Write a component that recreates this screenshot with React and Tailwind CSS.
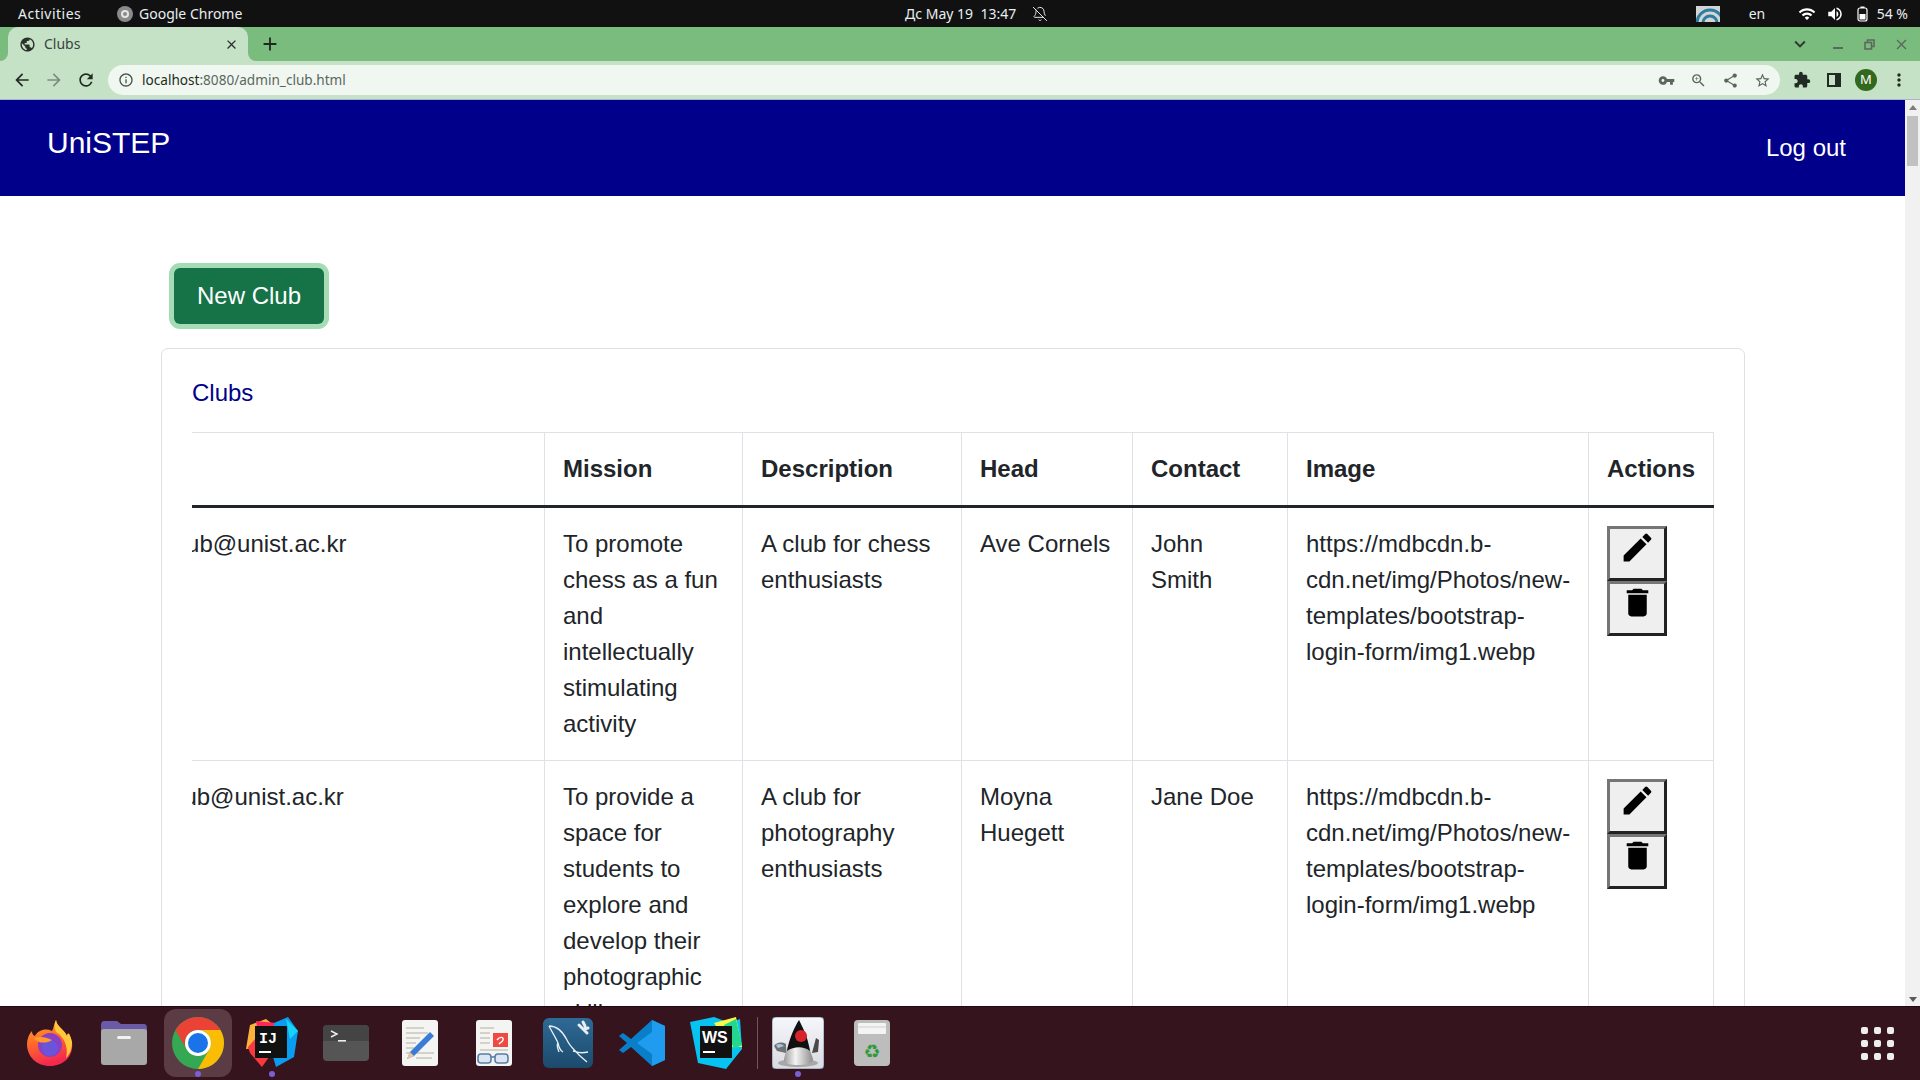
import React from "react";
import { BellOff } from "lucide-react";
import {
  MdAdd, MdArrowBack, MdArrowForward, MdClose, MdDelete, MdEdit, MdExpandMore, MdExtension,
  MdInfoOutline, MdMoreVert, MdPublic, MdRefresh, MdShare, MdStarBorder,
  MdVolumeUp, MdVpnKey, MdWifi, MdZoomIn,
} from "react-icons/md";

const imageUrl = "https://mdbcdn.b-cdn.net/img/Photos/new-templates/bootstrap-login-form/img1.webp";

const clubs = [
  {
    email: "chessclub@unist.ac.kr",
    mission: "To promote chess as a fun and intellectually stimulating activity",
    description: "A club for chess enthusiasts",
    head: "Ave Cornels",
    contact: "John Smith",
  },
  {
    email: "photoclub@unist.ac.kr",
    mission: "To provide a space for students to explore and develop their photographic skills",
    description: "A club for photography enthusiasts",
    head: "Moyna Huegett",
    contact: "Jane Doe",
  },
];

const headers = ["Email", "Mission", "Description", "Head", "Contact", "Image", "Actions"];
const colWidths = [457, 198, 219, 171, 155, 301, 125];

const TopBar = () => (
  <div className="h-[27px] shrink-0 bg-[#111111] flex items-center text-[14px] text-[#e8eef2] font-['Noto_Sans',sans-serif]">
    <span className="ml-[18px] w-[99px] tracking-[0.5px]">Activities</span>
    <span className="w-4 h-4 rounded-full bg-[#8a8a8a] flex items-center justify-center mr-[6px]">
      <span className="w-2 h-2 rounded-full border-2 border-[#e5e5e5]" />
    </span>
    <span className="w-[766px]">Google Chrome</span>
    <span className="w-[127px] whitespace-pre">Дс May 19  13:47</span>
    <BellOff size={16} strokeWidth={1.5} className="text-[#e8e8e8]" />
    <div className="ml-auto flex items-center">
      <svg width="24" height="16" viewBox="0 0 24 16">
        <rect width="24" height="16" fill="#d4d4d4" />
        <circle cx="14" cy="17" r="13" fill="none" stroke="#2b7ea1" strokeWidth="3" />
        <circle cx="14" cy="17" r="7" fill="none" stroke="#2b7ea1" strokeWidth="3" />
      </svg>
      <span className="ml-[29px] w-[45px]">en</span>
      <MdWifi className="ml-[4px] text-[18px] text-white" />
      <MdVolumeUp className="ml-[10px] text-[18px] text-white" />
      <svg className="ml-[13px]" width="12" height="16" viewBox="0 0 12 16">
        <rect x="1" y="2" width="9" height="13" rx="2" fill="none" stroke="#fff" strokeWidth="1.2" />
        <rect x="3.5" y="0.5" width="4" height="1.5" fill="#fff" />
        <rect x="2.5" y="8" width="6" height="5.5" fill="#fff" />
      </svg>
      <span className="ml-[8px] mr-[12px] whitespace-pre">54 %</span>
    </div>
  </div>
);

const TabStrip = () => (
  <div className="h-[34px] shrink-0 bg-[#7abc7e] flex items-stretch text-[#1f2a20] font-['Noto_Sans',sans-serif]">
    <div className="relative ml-2 w-[240px] bg-[#c5e1c6] rounded-t-[10px] flex items-center pl-[11px] pr-[9px] text-[14px]">
      <svg className="absolute left-[-8px] bottom-0" width="8" height="8" viewBox="0 0 8 8">
        <path d="M8 0V8H0A8 8 0 0 0 8 0Z" fill="#c5e1c6" />
      </svg>
      <svg className="absolute right-[-8px] bottom-0" width="8" height="8" viewBox="0 0 8 8">
        <path d="M0 0V8H8A8 8 0 0 1 0 0Z" fill="#c5e1c6" />
      </svg>
      <MdPublic className="text-[17px] text-[#2a312b] mr-[8px]" />
      <span className="text-[#3a443b] -mt-[2px]">Clubs</span>
      <MdClose className="ml-auto text-[15px] text-[#2a312b]" />
    </div>
    <div className="ml-[11px] flex items-center">
      <MdAdd className="text-[22px] text-[#20281f]" />
    </div>
    <div className="ml-auto flex items-center text-[#3f4a40]">
      <MdExpandMore className="text-[22px] text-[#2e3a2f]" />
      <span className="ml-[22px] w-[10px] h-[2px] bg-[#5c6a5e] mt-[7px]" />
      <svg className="ml-[21px]" width="11" height="11" viewBox="0 0 11 11" fill="none" stroke="#5c6a5e" strokeWidth="1.6">
        <rect x="1" y="3.5" width="6.5" height="6.5" />
        <path d="M3.5 3V1H10V7.5H8" />
      </svg>
      <MdClose className="ml-[18px] mr-[10px] text-[17px] text-[#5c6a5e]" />
    </div>
  </div>
);

const ToolBar = () => (
  <div className="h-[39px] shrink-0 bg-[#c5e1c6] flex items-center font-['Noto_Sans',sans-serif] border-b border-[#aab5cf]">
    <MdArrowBack className="ml-[12px] text-[20px] text-[#222b23]" />
    <MdArrowForward className="ml-[12px] text-[20px] text-[#7f8c80]" />
    <MdRefresh className="ml-[12px] text-[20px] text-[#222b23]" />
    <div className="ml-[12px] w-[1672px] h-[30px] rounded-full bg-[#f0f7f1] flex items-center pl-[10px] pr-[9px] text-[13.6px]">
      <MdInfoOutline className="text-[16px] text-[#4a524b]" />
      <span className="ml-[8px] text-[#1f2a20]">localhost</span>
      <span className="text-[#5d665e]">:8080/admin_club.html</span>
      <div className="ml-auto flex items-center gap-[15px] text-[#5d665e]">
        <MdVpnKey className="text-[17px]" />
        <MdZoomIn className="text-[17px]" />
        <MdShare className="text-[17px]" />
        <MdStarBorder className="text-[17px]" />
      </div>
    </div>
    <MdExtension className="ml-[13px] text-[18px] text-[#222b23]" />
    <svg className="ml-[16px]" width="14" height="14" viewBox="0 0 14 14">
      <rect x="1" y="1" width="12" height="12" fill="none" stroke="#222b23" strokeWidth="2" />
      <rect x="8" y="1" width="5" height="12" fill="#222b23" />
    </svg>
    <span className="ml-[14px] w-[22px] h-[22px] rounded-full bg-[#33691e] text-white text-[13px] flex items-center justify-center">M</span>
    <MdMoreVert className="ml-[12px] text-[20px] text-[#222b23]" />
  </div>
);

const NavBar = () => (
  <div className="h-[96px] shrink-0 bg-[#00008b] flex items-start text-white">
    <span className="ml-[47px] mt-[25px] text-[30px] leading-[36px]">UniSTEP</span>
    <span className="ml-auto mr-[59px] mt-[30px] text-[24px] leading-[36px]">Log out</span>
  </div>
);

const ActionButton = ({ children }) => (
  <button className="w-[60px] h-[55px] bg-[#efefef] border-[3px] border-t-[#767676] border-l-[#767676] border-r-[#222222] border-b-[#222222] flex justify-center text-[37px] text-black">
    {children}
  </button>
);

const ClubTable = () => (
  <div className="flex justify-end overflow-hidden">
    <table className="shrink-0 w-[1626px] table-fixed border-collapse text-[24px] leading-[36px] text-[#212529]">
      <colgroup>
        {colWidths.map((w) => (
          <col key={w} style={{ width: w }} />
        ))}
      </colgroup>
      <thead>
        <tr className="border-t border-b-[3px] border-t-[#dee2e6] border-b-[#212529]">
          {headers.map((h) => (
            <th key={h} className="px-[18px] py-[18px] text-left font-bold border-x border-[#dee2e6]">
              {h}
            </th>
          ))}
        </tr>
      </thead>
      <tbody>
        {clubs.map((c) => (
          <tr key={c.email} className="border-b border-[#dee2e6] align-top">
            <td className="px-[18px] py-[18px] border-x border-[#dee2e6]">{c.email}</td>
            <td className="px-[18px] py-[18px] border-x border-[#dee2e6]">{c.mission}</td>
            <td className="px-[18px] py-[18px] border-x border-[#dee2e6]">{c.description}</td>
            <td className="px-[18px] py-[18px] border-x border-[#dee2e6]">{c.head}</td>
            <td className="px-[18px] py-[18px] border-x border-[#dee2e6]">{c.contact}</td>
            <td className="px-[18px] py-[18px] border-x border-[#dee2e6]">{imageUrl}</td>
            <td className="px-[18px] py-[18px] border-x border-[#dee2e6]">
              <ActionButton><MdEdit /></ActionButton>
              <ActionButton><MdDelete /></ActionButton>
            </td>
          </tr>
        ))}
      </tbody>
    </table>
  </div>
);

const Content = () => (
  <div className="flex-1 min-h-0 flex overflow-hidden bg-white font-['Liberation_Sans',Arial,sans-serif]">
    <div className="flex-1 min-w-0 overflow-hidden">
      <NavBar />
      <div className="ml-[161px] w-[1584px] pt-[72px]">
        <button className="ml-[13px] w-[150px] h-[56px] rounded-[6px] bg-[#157347] text-white text-[24px] ring-[5px] ring-[#a5dcb5]">
          New Club
        </button>
        <div className="mt-[24px] border border-[#dfe0e2] rounded-[7px] px-[30px] pt-[26px] pb-[30px]">
          <div className="text-[24px] leading-[36px] text-[#00008b] mb-[21px]">Clubs</div>
          <ClubTable />
        </div>
      </div>
    </div>
    <div className="w-[15px] shrink-0 bg-[#f1f1f1] flex flex-col items-center relative">
      <span className="mt-[5px] w-0 h-0 border-x-[4px] border-x-transparent border-b-[5px] border-b-[#7d7d7d]" />
      <span className="mt-[6px] w-[11px] h-[50px] bg-[#c1c1c1]" />
      <span className="mt-auto mb-[4px] w-0 h-0 border-x-[4px] border-x-transparent border-t-[5px] border-t-[#5a5a5a]" />
    </div>
  </div>
);

const Firefox = () => (
  <svg width="48" height="48" viewBox="0 0 48 48">
    <defs>
      <linearGradient id="ffBody" x1="0" y1="0" x2="0.3" y2="1">
        <stop offset="0" stopColor="#ffb020" />
        <stop offset="0.5" stopColor="#ff6a2b" />
        <stop offset="1" stopColor="#f5294f" />
      </linearGradient>
    </defs>
    <path d="M30 1C31 8 38 10 41 17C42 12 44 15 46 23C48 38 37 47 24 47C11 47 1 38 1 25C1 20 3 15 6 12C6 15 7 16 9 17C12 11 20 9 26 12C28 8 28 5 30 1Z" fill="url(#ffBody)" />
    <path d="M30 1C31 8 38 10 41 17C42 12 44 15 46 23C46 30 44 35 40 39C43 27 37 17 30 13C28 9 28 5 30 1Z" fill="#ffc83a" />
    <circle cx="24" cy="26" r="12" fill="#8a3fc4" />
    <circle cx="24" cy="29" r="8" fill="#6a55d8" />
    <path d="M8 19C14 17 20 18 26 21C22 24 16 24 13 23C11 22 9 21 8 19Z" fill="#ff9b2e" />
  </svg>
);

const Files = () => (
  <svg width="46" height="44" viewBox="0 0 46 44">
    <path d="M0 4C0 2 1 0 3 0H16L20 3H43C45 3 46 5 46 7V14H0Z" fill="#6a5aa8" />
    <rect y="8" width="46" height="36" rx="3" fill="#a8a8a8" />
    <rect x="16" y="15" width="14" height="3" rx="1.5" fill="#f2f2f2" />
  </svg>
);

const Chrome = () => (
  <svg width="52" height="52" viewBox="0 0 52 52">
    <circle cx="26" cy="26" r="26" fill="#34a853" />
    <path d="M3.5 13A26 26 0 0 1 48.5 13H26A13 13 0 0 0 14.7 32.5Z" fill="#ea4335" />
    <path d="M48.5 13A26 26 0 0 1 26 52L37.3 32.5A13 13 0 0 0 26 13Z" fill="#fbbc04" />
    <circle cx="26" cy="26" r="13" fill="#fff" />
    <circle cx="26" cy="26" r="10" fill="#1a73e8" />
  </svg>
);

const IntelliJ = () => (
  <svg width="52" height="52" viewBox="0 0 52 52">
    <polygon points="4,8 20,2 30,10 20,30 0,32" fill="#fcb33c" />
    <polygon points="2,30 20,10 30,30 16,50 4,36" fill="#f9383f" />
    <polygon points="10,4 30,6 34,24 14,28" fill="#fe2857" />
    <polygon points="28,6 42,0 52,14 48,40 30,50 24,30" fill="#0a9cf0" />
    <polygon points="40,2 52,14 44,22" fill="#15d4f5" />
    <rect x="9" y="9" width="32" height="32" fill="#111" />
    <text x="13" y="26" fontSize="15" fontWeight="700" fill="#fff" fontFamily="Liberation Mono, monospace">IJ</text>
    <rect x="13" y="34" width="12" height="2" fill="#fff" />
  </svg>
);

const Terminal = () => (
  <svg width="46" height="36" viewBox="0 0 46 36">
    <rect width="46" height="36" rx="4" fill="#555" />
    <path d="M0 4C0 2 2 0 4 0H42C44 0 46 2 46 4V16H0Z" fill="#444" />
    <path d="M8 6L14 9L8 12" fill="none" stroke="#eee" strokeWidth="1.4" />
    <rect x="15" y="15" width="8" height="1.6" fill="#eee" />
  </svg>
);

const Editor = () => (
  <svg width="36" height="46" viewBox="0 0 36 46">
    <rect width="36" height="46" rx="3" fill="#f4f4f2" />
    <g stroke="#c9c6ba" strokeWidth="1.6">
      <path d="M4 8H22M4 13H26M4 18H18M4 23H14M4 28H12M4 33H32M14 38H30" />
    </g>
    <path d="M28 12L32 16L12 36L5 39L8 32Z" fill="#3b7bd8" />
    <path d="M8 32L5 39L12 36Z" fill="#e8c89a" />
  </svg>
);

const Viewer = () => (
  <svg width="36" height="46" viewBox="0 0 36 46">
    <rect width="36" height="46" rx="3" fill="#f4f4f2" />
    <g stroke="#c9c6ba" strokeWidth="1.6">
      <path d="M4 8H18M4 13H14M4 18H14M4 23H14M4 30H32" />
    </g>
    <rect x="17" y="13" width="15" height="14" fill="#ee4a42" />
    <path d="M21 20C24 16 28 17 27 20C26 23 22 23 24 24" fill="none" stroke="#fff" strokeWidth="1.4" />
    <g fill="#dbe6f2" stroke="#5a7ea8" strokeWidth="1.6">
      <rect x="2" y="34" width="13" height="9" rx="3" />
      <rect x="19" y="34" width="13" height="9" rx="3" />
    </g>
    <path d="M15 37H19" stroke="#5a7ea8" strokeWidth="1.6" />
  </svg>
);

const Workbench = () => (
  <svg width="50" height="50" viewBox="0 0 50 50">
    <defs>
      <linearGradient id="wbBg" x1="0" y1="0" x2="0" y2="1">
        <stop offset="0" stopColor="#2e6a96" />
        <stop offset="1" stopColor="#1c4a6c" />
      </linearGradient>
    </defs>
    <rect width="50" height="50" rx="6" fill="url(#wbBg)" />
    <path d="M6 8C14 8 20 14 24 22C27 29 32 32 36 37L44 44M6 8C9 14 13 20 15 25C16 30 18 33 20 34M30 33C34 34 36 36 45 34M15 25C13 27 15 31 16 34" fill="none" stroke="#e8eef3" strokeWidth="1.3" />
    <path d="M36 7L44 15M40 4L42 8M45 10L41 11" stroke="#e8eef3" strokeWidth="3" strokeLinecap="round" />
  </svg>
);

const VSCode = () => (
  <svg width="46" height="46" viewBox="0 0 46 46">
    <path d="M33 0L46 6V40L33 46L12 27L4 33L0 30L8 23L0 16L4 13L12 19Z" fill="#0a7fc9" />
    <path d="M33 0L46 6V40L33 46V34L18 23L33 12Z" fill="#1f9cf0" />
  </svg>
);

const WebStorm = () => (
  <svg width="52" height="52" viewBox="0 0 52 52">
    <polygon points="0,5 24,0 40,6 50,2 52,32 36,52 8,46" fill="#07c3f2" />
    <polygon points="24,6 46,0 52,30 40,30" fill="#fcf84a" />
    <polygon points="34,8 46,2 52,28 44,32" fill="#22d88f" />
    <rect x="10" y="9" width="32" height="32" fill="#111" />
    <text x="12" y="26" fontSize="16" fontWeight="700" fill="#fff" fontFamily="Liberation Sans, sans-serif">WS</text>
    <rect x="13" y="34" width="12" height="2" fill="#fff" />
  </svg>
);

const Duke = () => (
  <svg width="52" height="52" viewBox="0 0 52 52">
    <defs>
      <linearGradient id="dukeBg" x1="0" y1="0" x2="0" y2="1">
        <stop offset="0" stopColor="#f6f7fb" />
        <stop offset="1" stopColor="#d9dbe2" />
      </linearGradient>
      <linearGradient id="dukeBody" x1="0" y1="0" x2="1" y2="0">
        <stop offset="0" stopColor="#9a9a9a" />
        <stop offset="0.4" stopColor="#f4f4f4" />
        <stop offset="1" stopColor="#8c8c8c" />
      </linearGradient>
    </defs>
    <rect width="52" height="52" rx="4" fill="url(#dukeBg)" stroke="#5d7a94" strokeWidth="0.8" />
    <ellipse cx="26" cy="46" rx="20" ry="4" fill="#a8a8a8" />
    <path d="M15 30H37L41 42C41 47 33 48 26 48C19 48 11 47 12 42Z" fill="url(#dukeBody)" />
    <path d="M27 3C30 9 36 20 38 34C32 29 22 29 15 34C17 22 23 9 27 3Z" fill="#111" />
    <circle cx="29" cy="19" r="6" fill="#d8232a" />
    <path d="M14 27C9 24 4 26 2 29L5 34L14 36Z" fill="#6f7378" />
    <path d="M4 28C7 26 10 27 12 29L6 31Z" fill="#a9c6dc" />
    <path d="M40 36L44 21L47 23L46 35Z" fill="#4a4a4a" />
  </svg>
);

const Trash = () => (
  <svg width="36" height="46" viewBox="0 0 36 46">
    <rect width="36" height="46" rx="4" fill="#bdbdbd" />
    <rect x="4" y="3" width="28" height="11" rx="1" fill="#f4f4f4" />
    <path d="M4 7H32" stroke="#cfcfcf" />
    <text x="18" y="38" textAnchor="middle" fontSize="19" fill="#2e9b3a" fontFamily="DejaVu Sans, sans-serif">♻</text>
  </svg>
);

const DockItem = ({ children, active, running }) => (
  <div className="relative w-[74px] h-[72px] flex items-center justify-center">
    {active && <span className="absolute left-[3px] top-[2px] w-[68px] h-[68px] rounded-[12px] bg-[#5b3c45]" />}
    <span className="relative flex">{children}</span>
    {running && <span className="absolute bottom-[2px] left-[34px] w-[6px] h-[6px] rounded-full bg-[#7b5fd6]" />}
  </div>
);

const Dock = () => (
  <div className="h-[74px] shrink-0 bg-[#36141e] border-t border-[#1c0a10] flex items-start pl-[13px]">
    <DockItem><Firefox /></DockItem>
    <DockItem><Files /></DockItem>
    <DockItem active running><Chrome /></DockItem>
    <DockItem running><IntelliJ /></DockItem>
    <DockItem><Terminal /></DockItem>
    <DockItem><Editor /></DockItem>
    <DockItem><Viewer /></DockItem>
    <DockItem><Workbench /></DockItem>
    <DockItem><VSCode /></DockItem>
    <DockItem><WebStorm /></DockItem>
    <div className="w-[8px] h-[72px] flex justify-center items-center">
      <span className="w-px h-[52px] bg-[#6f565d]" />
    </div>
    <DockItem running><Duke /></DockItem>
    <DockItem><Trash /></DockItem>
    <div className="ml-auto mr-[26px] mt-[20px] grid grid-cols-3 gap-x-[6px] gap-y-[6px]">
      {Array.from({ length: 9 }).map((_, i) => (
        <span key={i} className="h-[7px] w-[7px] rounded-[2px] bg-[#eeeeee]" />
      ))}
    </div>
  </div>
);

const App = () => {
  return (
    <div className="w-[1920px] h-[1080px] flex flex-col overflow-hidden">
      <TopBar />
      <TabStrip />
      <ToolBar />
      <Content />
      <Dock />
    </div>
  );
};

export default App;
